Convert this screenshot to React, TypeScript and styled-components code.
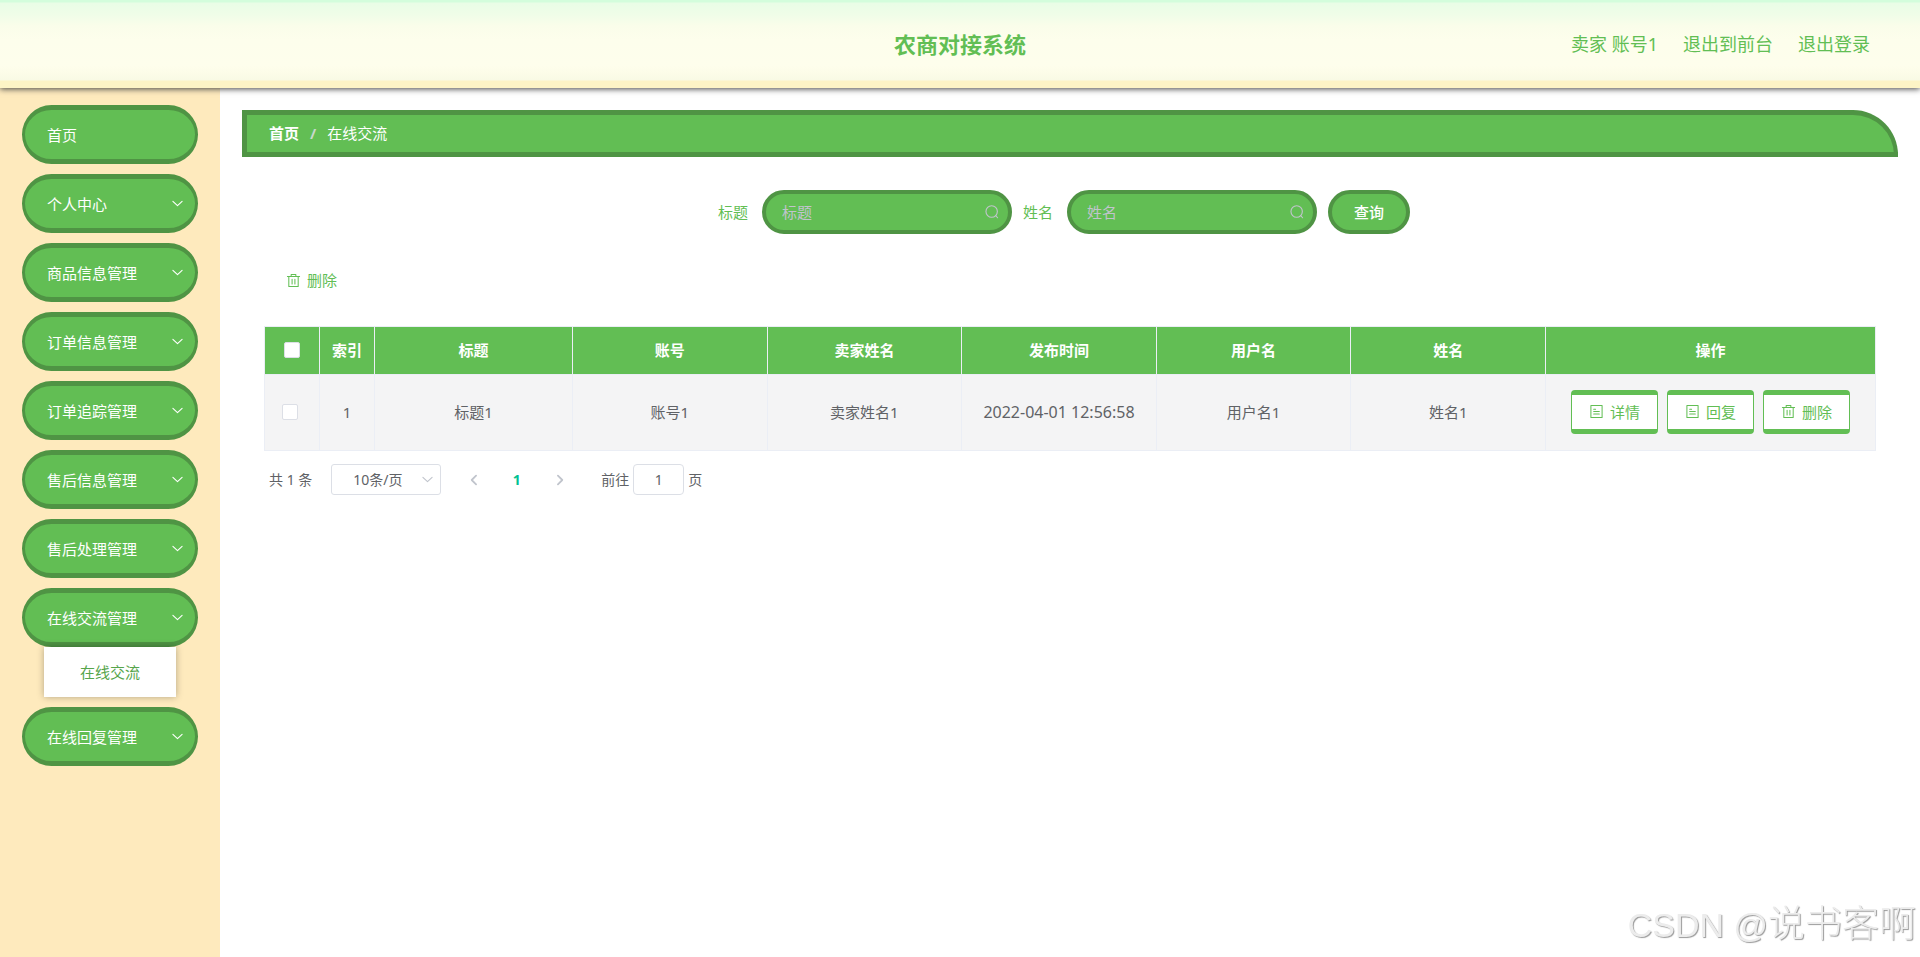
import React from "react";
import styled, { createGlobalStyle, css } from "styled-components";

const green = "#62be54";
const darkGreen = "#4f9444";
const line = "#ebeef5";
const controlLine = "#dcdfe6";
const muted = "#c0c4cc";
const ink = "#606266";

const GlobalStyle = createGlobalStyle`
  *, *::before, *::after { box-sizing: border-box; }
  body {
    margin: 0;
    background: #fff;
    color: ${ink};
    font-family: "Noto Sans", "Noto Sans CJK SC", sans-serif;
    font-size: 15px;
    line-height: 20px;
  }
  button, input, select { font: inherit; }
  button { cursor: pointer; }
`;

const Page = styled.div`
  display: flex;
  flex-direction: column;
  min-height: 100vh;
`;

const Header = styled.header`
  position: relative;
  z-index: 1;
  display: grid;
  grid-template-columns: 1fr auto 1fr;
  align-items: center;
  height: 88px;
  padding: 0 50px;
  color: ${green};
  background: linear-gradient(
    #d3fddc 0, #d3fddc 2px, #e9fde6 3px, #effde8 14px, #fafdea 26px, #fdfeec 40px,
    #fefeec 66px, #fcfce8 74px, #f9fae5 80px, #fdf4c6 81px, #fdf4c6 88px
  );
  box-shadow: 0 1px 6px #444;
`;

const Title = styled.h1`
  grid-column: 2;
  margin: 0;
  font-size: 22px;
  font-weight: 700;
`;

const HeaderNav = styled.nav`
  display: flex;
  justify-content: flex-end;
  gap: 25px;
  font-size: 18px;
`;

const HeaderLink = styled.a`
  color: ${green};
  text-decoration: none;
`;

const Body = styled.div`
  flex: 1;
  display: flex;
`;

const Sidebar = styled.nav`
  flex: 0 0 220px;
  padding: 17px 22px;
  background: #feeabd;
`;

const Menu = styled.ul`
  display: flex;
  flex-direction: column;
  gap: 10px;
  margin: 0;
  padding: 0;
  list-style: none;
`;

const MenuButton = styled.button`
  display: flex;
  align-items: center;
  justify-content: space-between;
  width: 100%;
  height: 59px;
  padding: 0 11px 0 22px;
  border: solid ${darkGreen};
  border-width: 5px 3px;
  border-radius: 30px;
  background: ${green};
  color: #fff;
`;

const SubLink = styled.a`
  display: block;
  margin: 0 22px;
  background: #fff;
  color: #56a54b;
  line-height: 50px;
  text-align: center;
  text-decoration: none;
  box-shadow: 0 0 7px rgba(0, 0, 0, 0.3);
`;

const Main = styled.main`
  flex: 1;
  min-width: 0;
  padding: 22px;
`;

const Breadcrumb = styled.div`
  display: flex;
  align-items: center;
  gap: 11px;
  height: 47px;
  padding: 0 22px 2px;
  border: solid ${darkGreen};
  border-width: 5px 4px 5px 5px;
  border-radius: 0 45px 0 0;
  background: ${green};
  color: #fff;
`;

const Separator = styled.span`
  color: #c8d8cc;
  font-weight: 700;
`;

const Panel = styled.section`
  padding: 33px 22px;
`;

const SearchForm = styled.form`
  display: flex;
  justify-content: center;
  align-items: center;
  gap: 11px;
  padding-right: 12px;
`;

const Field = styled.label`
  display: flex;
  align-items: center;
  gap: 14px;
  color: ${green};
`;

const capsule = css`
  height: 44px;
  border: 4px solid ${darkGreen};
  border-radius: 22px;
  background: ${green};
  color: #fff;
`;

const SearchBox = styled.span`
  ${capsule}
  display: flex;
  align-items: center;
  width: 250px;
  padding: 0 8px 0 16px;
  color: ${muted};
`;

const SearchInput = styled.input`
  flex: 1;
  min-width: 0;
  padding: 0;
  border: 0;
  outline: 0;
  background: transparent;
  color: #fff;
  &::placeholder { color: ${muted}; opacity: 1; }
`;

const SearchButton = styled.button`
  ${capsule}
  width: 82px;
  padding: 0;
  font-weight: 500;
`;

const Toolbar = styled.div`
  display: flex;
  padding: 24px 22px;
`;

const TextButton = styled.button`
  display: flex;
  align-items: center;
  gap: 6px;
  height: 44px;
  padding: 0;
  border: 0;
  background: none;
  color: ${green};
`;

const Table = styled.table`
  width: 100%;
  table-layout: fixed;
  border-collapse: collapse;
  border: 1px solid ${line};
`;

const Col = styled.col<{ $width?: number }>`
  ${(p) => p.$width && `width: ${p.$width}px;`}
`;

const Th = styled.th`
  height: 48px;
  padding: 0 0 2px;
  border: 1px solid ${line};
  background: ${green};
  color: #fff;
  font-weight: 700;
  text-align: center;
`;

const Td = styled.td`
  height: 76px;
  padding: 0 0 2px;
  border: 1px solid ${line};
  background: #f4f4f5;
  text-align: center;
`;

const Timestamp = styled.time`
  font-size: 16px;
`;

const Check = styled.input`
  appearance: none;
  display: block;
  width: 16px;
  height: 16px;
  margin: 0 auto;
  border: 1px solid ${controlLine};
  border-radius: 2px;
  background: #fff;
`;

const CheckCell = styled(Td)`
  padding-right: 4px;
`;

const RowActions = styled.div`
  display: flex;
  justify-content: center;
  gap: 9px;
`;

const ActionButton = styled.button`
  display: flex;
  align-items: center;
  justify-content: center;
  gap: 6px;
  width: 87px;
  height: 44px;
  padding: 0;
  border: solid ${green};
  border-width: 5px 1px;
  border-radius: 4px;
  background: #fff;
  color: ${green};
`;

const Pagination = styled.div`
  display: flex;
  align-items: center;
  margin-top: 13px;
  padding-left: 5px;
  font-size: 14px;
`;

const SizePicker = styled.label`
  display: grid;
  align-items: center;
  width: 110px;
  height: 31px;
  margin: 0 11px 0 19px;
  > * { grid-area: 1 / 1; }
  > svg { justify-self: end; margin-right: 7px; color: ${muted}; pointer-events: none; z-index: 1; }
`;

const SizeSelect = styled.select`
  appearance: none;
  width: 100%;
  height: 100%;
  padding: 0 21px;
  border: 1px solid ${controlLine};
  border-radius: 3px;
  background: #fff;
  color: ${ink};
`;

const PageButton = styled.button<{ $current?: boolean }>`
  display: flex;
  align-items: center;
  justify-content: center;
  width: 43px;
  height: 31px;
  padding: 0;
  border: 0;
  background: none;
  color: ${(p) => (p.$current ? "#00c292" : muted)};
  font-weight: 700;
`;

const Jump = styled.label`
  display: flex;
  align-items: center;
  gap: 4px;
  margin-left: 20px;
`;

const JumpInput = styled.input`
  width: 51px;
  height: 31px;
  padding: 0;
  border: 1px solid ${controlLine};
  border-radius: 4px;
  background: #fff;
  color: ${ink};
  text-align: center;
`;

const Watermark = styled.div`
  position: fixed;
  right: 4px;
  bottom: 10px;
  z-index: 2;
  color: #ececec;
  font-family: "Liberation Sans", "Noto Sans CJK SC", sans-serif;
  font-size: 37px;
  font-weight: 300;
  line-height: 44px;
  text-shadow: 1px 1px 1px #999;
  pointer-events: none;
`;

const WatermarkLatin = styled.span`
  font-size: 34px;
`;

const Svg = styled.svg.attrs({
  viewBox: "0 0 1024 1024",
  fill: "none",
  stroke: "currentColor",
  "aria-hidden": true,
})<{ $size?: number }>`
  flex: none;
  width: ${(p) => p.$size ?? 15}px;
  height: ${(p) => p.$size ?? 15}px;
`;

const ChevronDown = ({ size }: { size?: number }) => (
  <Svg $size={size} strokeWidth="88" strokeLinecap="round" strokeLinejoin="round">
    <path d="M150 340 512 680 874 340" />
  </Svg>
);

const ChevronSide = ({ next }: { next?: boolean }) => (
  <Svg $size={14} strokeWidth="130" strokeLinecap="round" strokeLinejoin="round">
    <path d={next ? "M360 200 680 512 360 824" : "M664 200 344 512 664 824"} />
  </Svg>
);

const SearchIcon = () => (
  <Svg $size={16} strokeWidth="72" strokeLinecap="round">
    <circle cx="490" cy="480" r="365" />
    <path d="M750 740 870 880" />
  </Svg>
);

const TrashIcon = () => (
  <Svg strokeWidth="70" strokeLinecap="round" strokeLinejoin="round">
    <path d="M96 240H928M352 230V100H672V230M192 250V928H832V250M416 430V750M608 430V750" />
  </Svg>
);

const DocumentIcon = () => (
  <Svg strokeWidth="70" strokeLinecap="round" strokeLinejoin="round">
    <path d="M130 100H894V928H130ZM320 352H450M320 512H704M320 690H704" />
  </Svg>
);

const menuItems = [
  { label: "首页" },
  { label: "个人中心", group: true },
  { label: "商品信息管理", group: true },
  { label: "订单信息管理", group: true },
  { label: "订单追踪管理", group: true },
  { label: "售后信息管理", group: true },
  { label: "售后处理管理", group: true },
  { label: "在线交流管理", group: true, child: "在线交流" },
  { label: "在线回复管理", group: true },
];

const headings = ["标题", "账号", "卖家姓名", "发布时间", "用户名", "姓名", "操作"];

export default function App() {
  return (
    <Page>
      <GlobalStyle />
      <Header>
        <Title>农商对接系统</Title>
        <HeaderNav>
          <span>卖家 账号1</span>
          <HeaderLink href="#front">退出到前台</HeaderLink>
          <HeaderLink href="#logout">退出登录</HeaderLink>
        </HeaderNav>
      </Header>
      <Body>
        <Sidebar>
          <Menu>
            {menuItems.map((item) => (
              <li key={item.label}>
                <MenuButton type="button">
                  {item.label}
                  {item.group && <ChevronDown size={13} />}
                </MenuButton>
                {item.child && <SubLink href="#chat">{item.child}</SubLink>}
              </li>
            ))}
          </Menu>
        </Sidebar>
        <Main>
          <Breadcrumb>
            <strong>首页</strong>
            <Separator>/</Separator>
            <span>在线交流</span>
          </Breadcrumb>
          <Panel>
            <SearchForm>
              {["标题", "姓名"].map((name) => (
                <Field key={name}>
                  {name}
                  <SearchBox>
                    <SearchInput type="text" placeholder={name} />
                    <SearchIcon />
                  </SearchBox>
                </Field>
              ))}
              <SearchButton type="button">查询</SearchButton>
            </SearchForm>
            <Toolbar>
              <TextButton type="button">
                <TrashIcon />
                删除
              </TextButton>
            </Toolbar>
            <Table>
              <colgroup>
                <Col $width={55} />
                <Col $width={55} />
                <Col $width={198} />
                <Col />
                <Col />
                <Col />
                <Col />
                <Col />
                <Col $width={330} />
              </colgroup>
              <thead>
                <tr>
                  <Th><Check type="checkbox" aria-label="全选" /></Th>
                  <Th>索引</Th>
                  {headings.map((h) => <Th key={h}>{h}</Th>)}
                </tr>
              </thead>
              <tbody>
                <tr>
                  <CheckCell><Check type="checkbox" aria-label="选择" /></CheckCell>
                  <Td>1</Td>
                  <Td>标题1</Td>
                  <Td>账号1</Td>
                  <Td>卖家姓名1</Td>
                  <Td><Timestamp>2022-04-01 12:56:58</Timestamp></Td>
                  <Td>用户名1</Td>
                  <Td>姓名1</Td>
                  <Td>
                    <RowActions>
                      <ActionButton type="button"><DocumentIcon />详情</ActionButton>
                      <ActionButton type="button"><DocumentIcon />回复</ActionButton>
                      <ActionButton type="button"><TrashIcon />删除</ActionButton>
                    </RowActions>
                  </Td>
                </tr>
              </tbody>
            </Table>
            <Pagination>
              <span>共 1 条</span>
              <SizePicker>
                <SizeSelect aria-label="每页条数" defaultValue="10">
                  <option value="10">10条/页</option>
                </SizeSelect>
                <ChevronDown size={13} />
              </SizePicker>
              <PageButton type="button" aria-label="上一页"><ChevronSide /></PageButton>
              <PageButton type="button" $current>1</PageButton>
              <PageButton type="button" aria-label="下一页"><ChevronSide next /></PageButton>
              <Jump>
                前往
                <JumpInput type="text" defaultValue="1" />
                页
              </Jump>
            </Pagination>
          </Panel>
        </Main>
      </Body>
      <Watermark><WatermarkLatin>CSDN @</WatermarkLatin>说书客啊</Watermark>
    </Page>
  );
}
